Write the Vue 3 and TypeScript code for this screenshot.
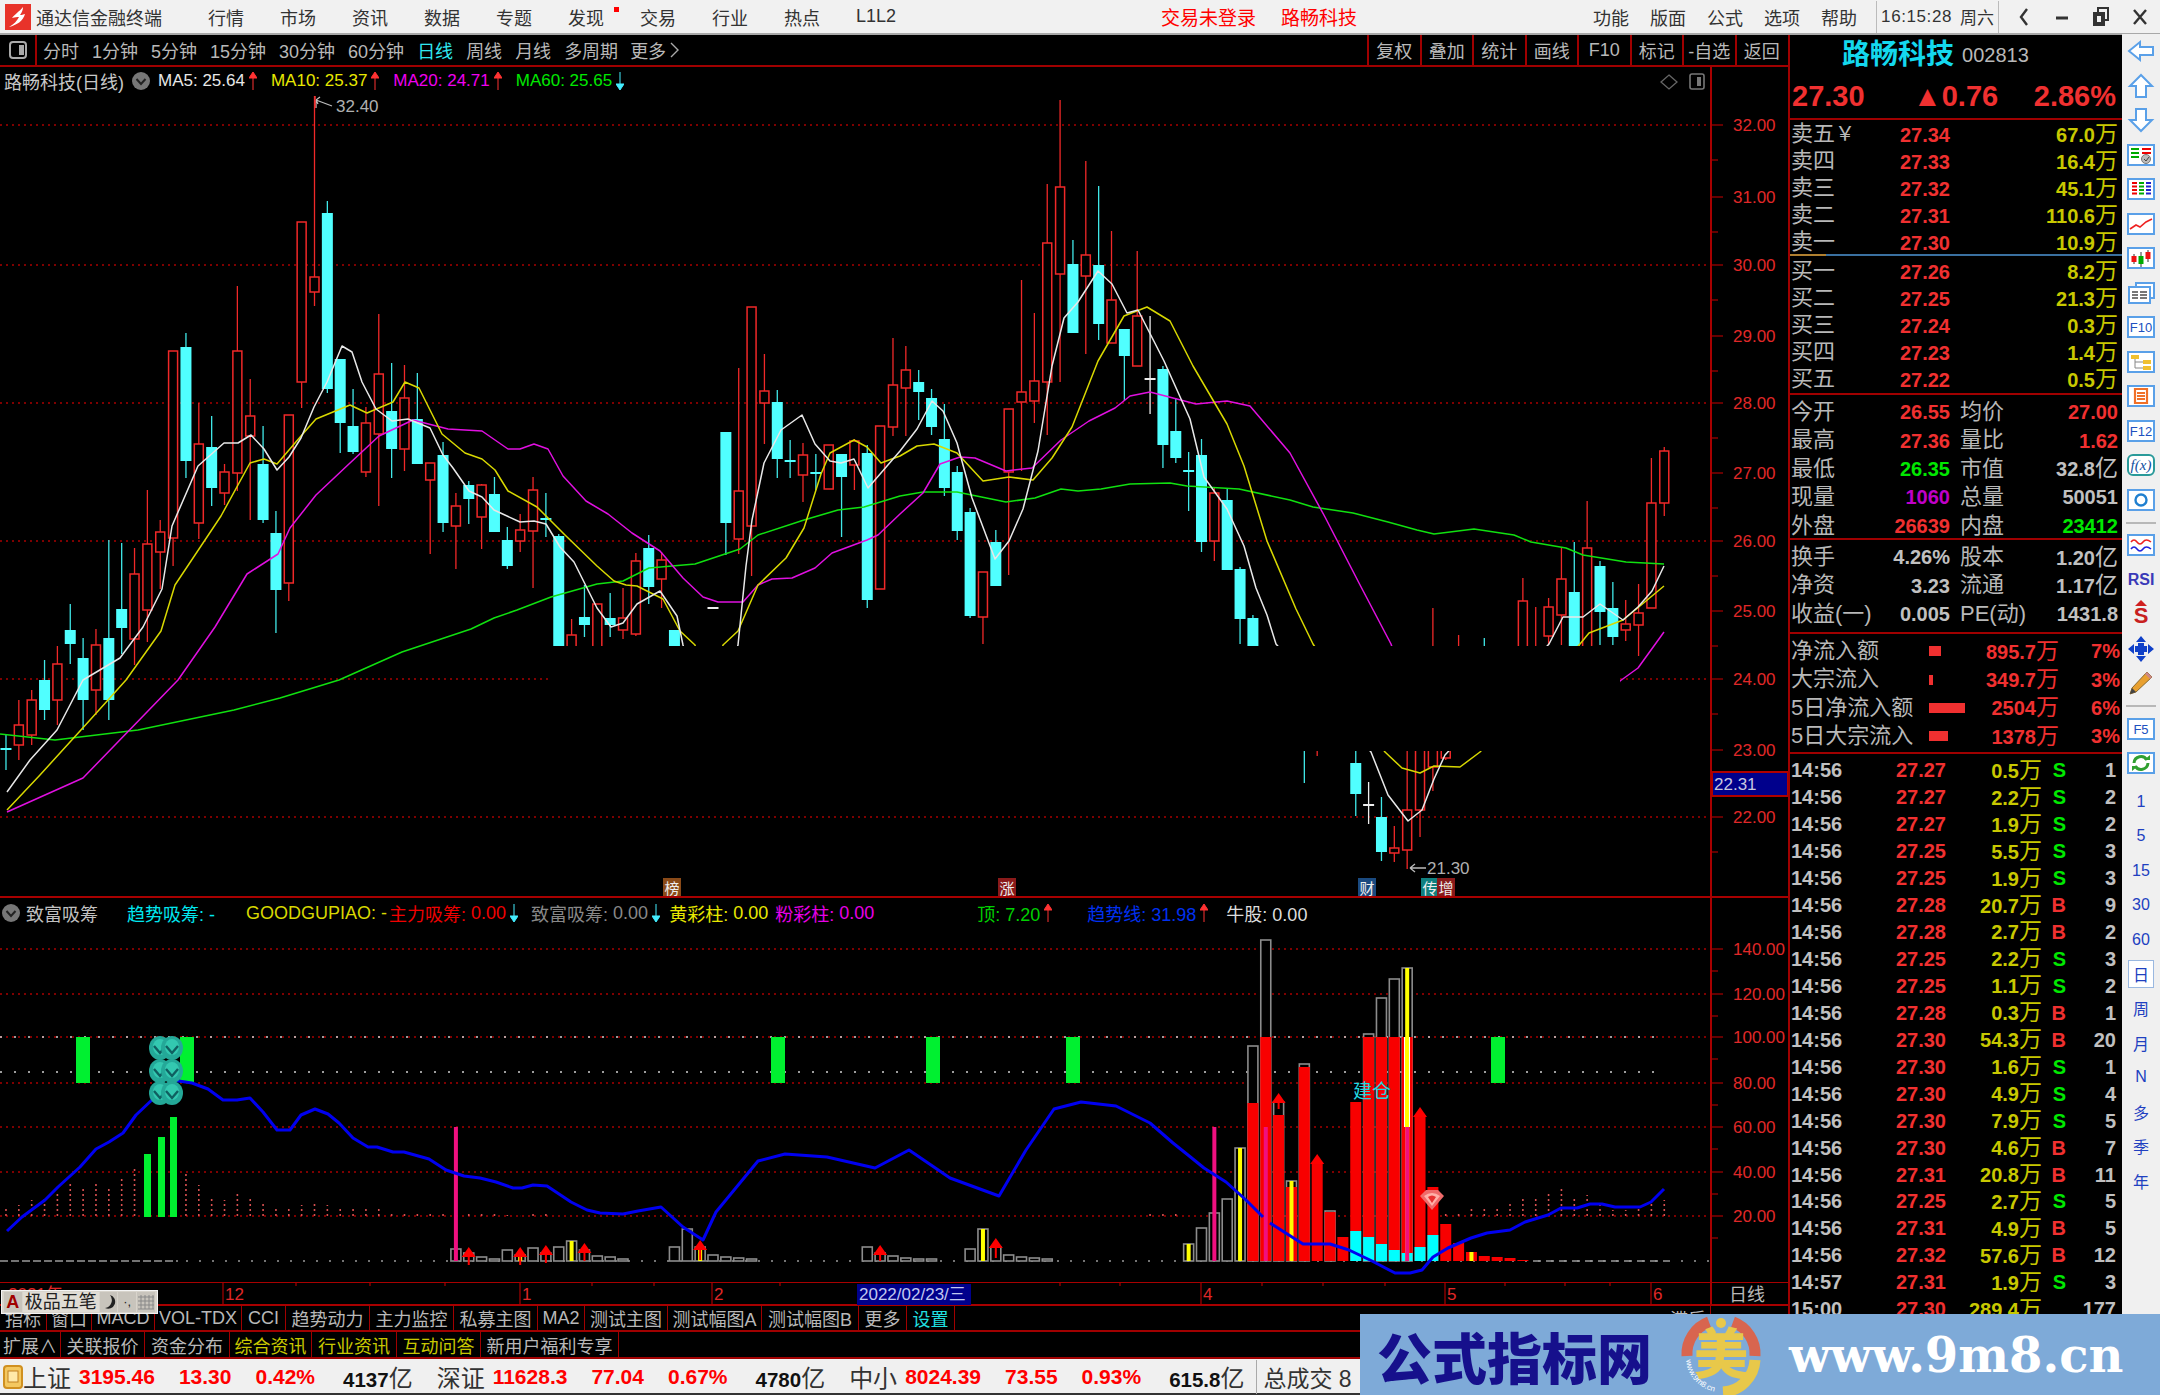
<template>
  <div class="app">
    <header class="titlebar">
      <svg class="logo" width="26" height="26" viewBox="0 0 26 26">
        <rect width="26" height="26" fill="#e8332a" />
        <path d="M18 3 C14 8 11 9 7 14 C10 13 12 13 14 13 C12 17 9 20 4 23 C12 21 18 17 20 10 C17 11 16 11 15 11 C17 8 18 6 18 3Z" fill="#fff" />
      </svg>
      <span class="app-name">通达信金融终端</span>
      <nav class="menu">
        <span v-for="m in menus" :key="m" :class="{ dot: m === '发现' }">{{ m }}</span>
      </nav>
      <span class="login">交易未登录</span>
      <span class="login stock">路畅科技</span>
      <nav class="menu right">
        <span v-for="m in rightMenus" :key="m">{{ m }}</span>
      </nav>
      <div class="clock"><span class="time">16:15:28</span><span>周六</span></div>
      <div class="winbtns">
        <svg width="18" height="22" viewBox="0 0 18 22"><path d="M12 3 L6 11 L12 19" fill="none" stroke="#333" stroke-width="2.4" /></svg>
        <svg width="18" height="22" viewBox="0 0 18 22"><path d="M3 12 H15" stroke="#333" stroke-width="3" /></svg>
        <svg width="20" height="22" viewBox="0 0 20 22"><path d="M7 6 V2 H17 V14 H13 M3 7 H13 V19 H3 Z M5 9 H11 V17 H5 Z" fill="none" stroke="#333" stroke-width="2" /></svg>
        <svg width="18" height="22" viewBox="0 0 18 22"><path d="M3 4 L15 18 M15 4 L3 18" stroke="#333" stroke-width="2.4" /></svg>
      </div>
    </header>

    <div class="body">
      <div class="left">
        <div class="toolbar">
          <div class="tool-toggle">
            <svg width="20" height="20" viewBox="0 0 20 20"><rect x="2" y="2" width="16" height="16" rx="3" fill="none" stroke="#aaa" stroke-width="2" /><rect x="11" y="5" width="5" height="10" fill="#aaa" /></svg>
          </div>
          <span v-for="p in periods" :key="p" class="period" :class="{ active: p === '日线' }">{{ p }}</span>
          <span class="period more">更多
            <svg width="9" height="16" viewBox="0 0 9 16"><path d="M1 1 L8 8 L1 15" fill="none" stroke="#aaa" stroke-width="1.4" /></svg>
          </span>
          <div class="tool-btns">
            <span v-for="b in toolBtns" :key="b">{{ b }}</span>
          </div>
        </div>

        <div class="pane">
          <div class="legend">
            <span class="stock-name">路畅科技(日线)</span>
            <svg class="chev" width="18" height="18" viewBox="0 0 18 18"><circle cx="9" cy="9" r="9" fill="#777" /><path d="M4.5 7 L9 12 L13.5 7" fill="none" stroke="#222" stroke-width="2" /></svg>
            <span v-for="m in maLegend" :key="m.t" class="ma-item" :style="{ color: m.c }">{{ m.t }}
              <svg width="8" height="18" viewBox="0 0 8 18"><path :d="m.up ? arrowUp : arrowDown" :fill="m.up ? '#f33' : '#4ef'" :stroke="m.up ? '#f33' : '#4ef'" /></svg>
            </span>
          </div>
          <svg class="chart" width="1788" height="831" viewBox="0 67 1788 831">
            <g class="grid-red">
              <line v-for="y in [125, 265, 403, 541, 679, 817]" :key="y" x1="0" x2="1711" :y1="y" :y2="y" />
            </g>
            <g v-for="c in candles" :key="c[0]">
              <template v-if="c[5] === 'r'">
                <line :x1="cx(c[0])" :x2="cx(c[0])" :y1="c[1]" :y2="c[4]" class="wick-r" />
                <rect :x="cx(c[0]) - 4.5" :y="c[2]" width="9" :height="c[3] - c[2]" class="body-r" />
              </template>
              <template v-else>
                <line :x1="cx(c[0])" :x2="cx(c[0])" :y1="c[1]" :y2="c[4]" :class="c[5] === 'c' ? 'wick-c' : 'wick-w'" />
                <rect :x="cx(c[0]) - 5.5" :y="c[2]" width="11" :height="Math.max(c[3] - c[2], 2)" :class="c[5] === 'c' ? 'body-c' : 'body-w'" />
              </template>
            </g>
            <polyline :points="ma60" class="ma" stroke="#10e010" />
            <polyline :points="ma20" class="ma" stroke="#e010e0" />
            <polyline :points="ma10" class="ma" stroke="#d8d800" />
            <polyline :points="ma5" class="ma" stroke="#e8e8e8" />
            <!-- the band the source screenshot has blanked out -->
            <rect x="551" y="646" width="1069" height="105" fill="#000" />
            <path d="M332 106 L316 100 M316 100 L320 97 M316 100 L318 104 M316 100 V108" fill="none" stroke="#bbb" stroke-width="1.3" />
            <line x1="315" x2="315" y1="96" y2="108" stroke="#e33" stroke-width="1.5" />
            <text x="336" y="112" class="lbl-gray">32.40</text>
            <path d="M1426 868 H1410 M1410 868 L1415 864 M1410 868 L1415 872" fill="none" stroke="#bbb" stroke-width="1.3" />
            <text x="1427" y="874" class="lbl-gray">21.30</text>
            <g v-for="m in markers" :key="m.t">
              <rect :x="m.x - 9" y="878" width="18" height="20" :fill="m.bg" />
              <text :x="m.x" y="894" text-anchor="middle" class="marker">{{ m.t }}</text>
            </g>
            <path d="M1669 75 L1677 82 L1669 89 L1661 82 Z" fill="none" stroke="#666" stroke-width="1.3" />
            <rect x="1690" y="74" width="14" height="15" rx="2" fill="none" stroke="#777" stroke-width="1.6" />
            <rect x="1697" y="77" width="4" height="9" fill="#777" />
            <line x1="1711" x2="1711" y1="67" y2="898" class="axis" />
            <g v-for="l in priceAxis" :key="l.t">
              <line x1="1711" x2="1723" :y1="l.y" :y2="l.y" class="tick" />
              <line x1="1711" x2="1718" :y1="l.y + 35" :y2="l.y + 35" class="tick" />
              <text x="1733" :y="l.y + 6" class="lbl-red">{{ l.t }}</text>
            </g>
            <rect x="1712" y="772" width="76" height="24" fill="#00008c" stroke="#b00000" stroke-width="2" />
            <text x="1714" y="790" class="lbl-light">22.31</text>
            <line x1="0" x2="1788" y1="897" y2="897" class="axis" />
          </svg>
        </div>

        <div class="pane">
          <div class="legend sub">
            <svg class="chev" width="18" height="18" viewBox="0 0 18 18"><circle cx="9" cy="9" r="9" fill="#777" /><path d="M4.5 7 L9 12 L13.5 7" fill="none" stroke="#222" stroke-width="2" /></svg>
            <span class="sub-title">致富吸筹</span>
            <span v-for="s in subLegend" :key="s.t" class="sub-item" :style="{ marginLeft: s.ml + 'px', color: s.c }">
              {{ s.t }}<em v-if="s.v" :style="{ color: s.vc || s.c }">{{ s.v }}</em>
              <svg v-if="s.a" width="8" height="18" viewBox="0 0 8 18"><path :d="s.a === 'up' ? arrowUp : arrowDown" :fill="s.a === 'up' ? '#f33' : '#4ef'" :stroke="s.a === 'up' ? '#f33' : '#4ef'" /></svg>
            </span>
          </div>
          <svg class="chart" width="1788" height="384" viewBox="0 898 1788 384">
            <g class="grid-red">
              <line v-for="y in [949, 994, 1037, 1083, 1127, 1172, 1216]" :key="y" x1="0" x2="1711" :y1="y" :y2="y" />
            </g>
            <g class="grid-white">
              <line x1="0" x2="1665" y1="1037" y2="1037" />
              <line x1="0" x2="1665" y1="1072" y2="1072" />
            </g>
            <line x1="0" x2="178" y1="1261" y2="1261" stroke="#999" stroke-width="1.6" stroke-dasharray="8 3" />
            <line x1="186" x2="1710" y1="1261" y2="1261" class="base-dots" />
            <line x1="1533" x2="1668" y1="1261" y2="1261" stroke="#999" stroke-width="1.6" stroke-dasharray="8 5" />
            <line v-for="d in dotBars" :key="d[0]" :x1="cx(d[0])" :x2="cx(d[0])" y1="1216" :y2="1216 - d[1]" class="dot-bar" />
            <rect v-for="b in greenBlocks" :key="b" :x="b" y="1037" width="14" height="46" fill="#00f030" />
            <rect x="144" y="1154" width="7" height="63" fill="#00f030" />
            <rect x="158" y="1137" width="7" height="80" fill="#00f030" />
            <rect x="170" y="1117" width="7" height="100" fill="#00f030" />
            <g v-for="b in volBars" :key="b[0]">
              <rect v-if="b[1]" :x="cx(b[0]) - 5" :y="1261 - b[1]" width="10" :height="b[1]" class="vol-gray" />
              <rect v-if="b[2]" :x="cx(b[0]) - 5.5" :y="1261 - b[2]" width="11" :height="b[2]" fill="#f80000" />
              <rect v-if="b[3]" :x="cx(b[0]) - 5.5" :y="1261 - b[3]" width="11" :height="b[3]" fill="#00ffff" />
              <rect v-if="b[4]" :x="cx(b[0]) - 2" :y="1261 - b[4]" width="4" :height="b[4]" fill="#ffff00" />
            </g>
            <rect x="1404" y="1037" width="6" height="90" fill="#fff" />
            <rect x="1405" y="1037" width="4" height="90" fill="#ffff00" />
            <rect v-for="i in pinkLines" :key="i" :x="cx(i) - 2" y="1127" width="4" height="134" fill="#f01080" />
            <g v-for="a in upArrows" :key="a[0]" :transform="`translate(${cx(a[0])} ${a[1]})`">
              <path d="M0 0 L7 10 H-7 Z" fill="#f00" />
              <line x1="0" x2="0" y1="8" :y2="a[2]" stroke="#f00" stroke-width="2" />
            </g>
            <polyline :points="blueLine" class="blue" />
            <polyline :points="blueLine2" class="blue" />
            <g v-for="c in coins" :key="c[0] + '-' + c[1]" :transform="`translate(${c[0]} ${c[1]})`">
              <ellipse rx="11" ry="12" fill="#24a898" />
              <ellipse rx="7" ry="8" cy="-1" fill="#33c8b0" />
              <path d="M-6 -2 L0 5 L6 -2" fill="none" stroke="#0f5f60" stroke-width="2.4" />
            </g>
            <text x="1372" y="1098" text-anchor="middle" class="build">建仓</text>
            <g transform="translate(1432 1199)">
              <path d="M-12 -3 L-6 -9 H6 L12 -3 L0 11 Z" fill="#f06a6a" />
              <path d="M-8 -3 Q0 -9 8 -3 L0 7 Z" fill="#ffb0a8" />
              <path d="M-4 -2 Q0 -5 4 -2 L0 4 Z" fill="#e83030" />
            </g>
            <line x1="1711" x2="1711" y1="898" y2="1282" class="axis" />
            <g v-for="l in subAxis" :key="l.t">
              <line x1="1711" x2="1723" :y1="l.y" :y2="l.y" class="tick" />
              <line x1="1711" x2="1718" :y1="l.y + 22" :y2="l.y + 22" class="tick" />
              <text x="1733" :y="l.y + 6" class="lbl-red">{{ l.t }}</text>
            </g>
          </svg>
        </div>

        <svg class="chart" width="1788" height="24" viewBox="0 1282 1788 24">
          <line x1="0" x2="1788" y1="1282" y2="1282" class="axis" />
          <line x1="0" x2="1788" y1="1305" y2="1305" class="axis" />
          <line v-for="x in dateTicks" :key="x" :x1="x" :x2="x" y1="1282" y2="1286" class="tick" />
          <g v-for="d in dateLabels" :key="d.x">
            <line :x1="d.x" :x2="d.x" y1="1282" y2="1305" class="tick" />
            <text :x="d.x + 2" y="1300" class="lbl-red">{{ d.t }}</text>
          </g>
          <text x="8" y="1300" class="lbl-red">2021年</text>
          <rect x="857" y="1284" width="114" height="21" fill="#00008c" />
          <text x="859" y="1300" class="lbl-date">2022/02/23/三</text>
          <line x1="1711" x2="1711" y1="1282" y2="1305" class="axis" />
          <text x="1729" y="1301" class="lbl-cjk">日线</text>
        </svg>

        <div class="tabs first">
          <span v-for="t in tabs1" :key="t.t" :class="t.c" :style="{ width: t.w + 'px' }">{{ t.t }}</span>
          <span class="tail" style="width: 45px">滞后</span>
          <span style="width: 76px"></span>
        </div>
        <div class="tabs">
          <span v-for="t in tabs2" :key="t.t" :class="t.c" :style="{ width: t.w + 'px' }">{{ t.t }}</span>
        </div>
      </div>

      <aside class="quote">
        <div class="q-title"><b>路畅科技</b><span>002813</span></div>
        <div class="q-price"><span>27.30</span><span>▲0.76</span><span class="pct">2.86%</span></div>
        <div class="book sell">
          <div v-for="r in sells" :key="r[0]" class="book-row">
            <span class="lab">{{ r[0] }}<i v-if="r[0] === '卖五'">￥</i></span>
            <b class="red">{{ r[1] }}</b>
            <b class="vol">{{ r[2] }}<i>万</i></b>
          </div>
        </div>
        <div class="book buy">
          <div v-for="r in buys" :key="r[0]" class="book-row">
            <span class="lab">{{ r[0] }}</span>
            <b class="red">{{ r[1] }}</b>
            <b class="vol">{{ r[2] }}<i>万</i></b>
          </div>
        </div>
        <div class="stats s1">
          <div v-for="s in stats1" :key="s[0]" class="cell">
            <span class="lab">{{ s[0] }}</span><b :class="s[2]">{{ s[1] }}<i v-if="s[3]">{{ s[3] }}</i></b>
          </div>
        </div>
        <div class="stats s2">
          <div v-for="s in stats2" :key="s[0]" class="cell">
            <span class="lab">{{ s[0] }}</span><b class="gray">{{ s[1] }}<i v-if="s[2]">{{ s[2] }}</i></b>
          </div>
        </div>
        <div class="flow">
          <div v-for="f in flows" :key="f.l" class="flow-row">
            <span class="lab">{{ f.l }}</span>
            <span class="bar-cell"><u :style="{ width: f.w + 'px' }"></u></span>
            <b class="red">{{ f.v }}<i>万</i></b>
            <b class="red">{{ f.p }}</b>
          </div>
        </div>
        <div class="ticks">
          <div v-for="(t, i) in ticks" :key="i" class="tick-row">
            <b class="gray">{{ t[0] }}</b>
            <b class="red">{{ t[1] }}</b>
            <b class="vol" :class="{ mag: t[0] === '15:00' }">{{ t[2] }}<i>万</i></b>
            <b :class="t[3] === 'S' ? 'green' : 'red'">{{ t[3] }}</b>
            <b class="gray">{{ t[4] }}</b>
          </div>
        </div>
      </aside>

      <nav class="sidebar">
        <div class="ic"><svg width="30" height="26" viewBox="0 0 30 26"><path d="M3 13 L14 4 V9 H27 V17 H14 V22 Z" class="ar" /></svg></div>
        <div class="ic"><svg width="30" height="26" viewBox="0 0 30 26"><path d="M15 2 L26 13 H20 V24 H10 V13 H4 Z" class="ar" /></svg></div>
        <div class="ic"><svg width="30" height="26" viewBox="0 0 30 26"><path d="M15 24 L26 13 H20 V2 H10 V13 H4 Z" class="ar" /></svg></div>
        <div class="ic"><svg width="30" height="26" viewBox="0 0 30 26">
          <rect x="2" y="3" width="26" height="20" class="fr" />
          <path d="M5 7 H13 M5 11 H13 M5 15 H13" stroke="#0a0" stroke-width="2" /><path d="M16 7 H25 M16 11 H25" stroke="#e00" stroke-width="2" />
          <circle cx="20" cy="17" r="4.5" fill="#bbb" stroke="#777" /><path d="M18 17 L20 19 L23 15" fill="none" stroke="#444" />
        </svg></div>
        <div class="ic"><svg width="30" height="26" viewBox="0 0 30 26">
          <rect x="2" y="3" width="26" height="20" class="fr" />
          <path d="M6 7 H11 M6 10.5 H11 M6 14 H11 M6 17.5 H11" stroke="#e00" stroke-width="2" /><path d="M13 7 H18 M13 10.5 H18 M13 14 H18 M13 17.5 H18" stroke="#0a0" stroke-width="2" /><path d="M20 7 H25 M20 10.5 H25 M20 14 H25 M20 17.5 H25" stroke="#22c" stroke-width="2" />
        </svg></div>
        <div class="ic"><svg width="30" height="26" viewBox="0 0 30 26">
          <rect x="2" y="3" width="26" height="20" class="fr" />
          <path d="M4 18 L10 14 L14 16 L20 11 L26 8" fill="none" stroke="#e22" stroke-width="1.6" />
        </svg></div>
        <div class="ic"><svg width="30" height="26" viewBox="0 0 30 26">
          <rect x="2" y="3" width="26" height="20" class="fr" />
          <path d="M8 9 V19 M15 7 V22 M22 5 V17" stroke="#333" />
          <rect x="5.5" y="11" width="5" height="6" fill="#e11" /><rect x="12.5" y="11" width="5" height="8" fill="#0a0" /><rect x="19.5" y="7" width="5" height="7" fill="#e11" />
        </svg></div>
        <div class="ic"><svg width="30" height="26" viewBox="0 0 30 26">
          <rect x="10" y="3" width="18" height="15" class="fr" /><rect x="3" y="7" width="21" height="16" class="fr" />
          <path d="M6 12 H12 M6 15 H12 M6 18 H12 M14 12 H21 M14 15 H21 M14 18 H21" stroke="#777" stroke-width="1.8" />
        </svg></div>
        <div class="ic"><svg width="30" height="26" viewBox="0 0 30 26"><rect x="2" y="3" width="26" height="20" class="fr" /><text x="15" y="18" text-anchor="middle" class="ic-txt">F10</text></svg></div>
        <div class="ic"><svg width="30" height="26" viewBox="0 0 30 26">
          <rect x="2" y="3" width="26" height="20" class="fr" />
          <path d="M9 8 V19 H18 M9 13 H18" fill="none" stroke="#888" /><rect x="5" y="6" width="8" height="4" fill="#f0c030" /><rect x="17" y="11" width="8" height="4" fill="#f0c030" /><rect x="17" y="17" width="8" height="4" fill="#f0c030" />
        </svg></div>
        <div class="ic"><svg width="30" height="26" viewBox="0 0 30 26">
          <rect x="2" y="3" width="26" height="20" class="fr" />
          <path d="M9 6 H21 V20 H9 Z M11 10 H19 M11 13 H19 M11 16 H19" fill="none" stroke="#f07028" stroke-width="2.2" />
        </svg></div>
        <div class="ic"><svg width="30" height="26" viewBox="0 0 30 26"><rect x="2" y="3" width="26" height="20" class="fr" /><text x="15" y="18" text-anchor="middle" class="ic-txt">F12</text></svg></div>
        <div class="ic"><svg width="30" height="26" viewBox="0 0 30 26"><rect x="2" y="3" width="26" height="20" rx="5" fill="#fff" stroke="#2a9a9a" stroke-width="2" /><text x="15" y="18" text-anchor="middle" class="ic-fx">f(x)</text></svg></div>
        <div class="ic"><svg width="30" height="26" viewBox="0 0 30 26"><rect x="2" y="3" width="26" height="20" class="fr" /><circle cx="15" cy="13" r="5.5" fill="none" stroke="#2080d0" stroke-width="2.4" /></svg></div>
        <hr />
        <div class="ic"><svg width="30" height="26" viewBox="0 0 30 26">
          <rect x="2" y="3" width="26" height="20" class="fr" />
          <path d="M5 10 Q8 6 11 10 T17 10 T25 10" fill="none" stroke="#e22" stroke-width="1.6" /><path d="M5 17 Q8 13 11 17 T17 17 T25 17" fill="none" stroke="#22d" stroke-width="1.6" />
        </svg></div>
        <div class="ic"><span class="rsi">RSI</span></div>
        <div class="ic"><svg width="30" height="30" viewBox="0 0 30 30">
          <path d="M15 1 L21 7 H9 Z" fill="#d02020" /><text x="15" y="24" text-anchor="middle" class="ic-s">S</text>
        </svg></div>
        <div class="ic"><svg width="30" height="28" viewBox="0 0 30 28">
          <path d="M15 1 L20 7 H10 Z M15 27 L20 21 H10 Z M2 14 L8 9 V19 Z M28 14 L22 9 V19 Z" fill="#1040c8" /><rect x="9" y="11" width="12" height="6" fill="#1040c8" /><rect x="12" y="8" width="6" height="12" fill="#1040c8" />
        </svg></div>
        <div class="ic"><svg width="30" height="28" viewBox="0 0 30 28">
          <path d="M21 3 L26 8 L10 23 L4 25 L6 19 Z" fill="#e8a030" stroke="#8a6a30" /><path d="M21 3 L26 8 L24 10 L19 5 Z" fill="#c88" /><path d="M6 19 L10 23 L4 25 Z" fill="#444" />
        </svg></div>
        <hr />
        <div class="ic"><svg width="30" height="26" viewBox="0 0 30 26"><rect x="2" y="3" width="26" height="20" class="fr" /><text x="15" y="18" text-anchor="middle" class="ic-txt">F5</text></svg></div>
        <div class="ic"><svg width="30" height="26" viewBox="0 0 30 26">
          <rect x="2" y="3" width="26" height="20" class="fr" />
          <path d="M8 13 A7 7 0 0 1 21 10 M22 13 A7 7 0 0 1 9 16" fill="none" stroke="#30a030" stroke-width="3" /><path d="M18 10 H24 V5 Z M12 16 H6 V21 Z" fill="#30a030" />
        </svg></div>
        <div class="side-labels">
          <div v-for="l in sideLabels" :key="l" class="ic lab-btn" :class="{ on: l === '日' }">{{ l }}</div>
        </div>
      </nav>
    </div>

    <footer class="status">
      <svg class="st-icon" width="22" height="26" viewBox="0 0 22 26"><rect x="2" y="2" width="18" height="22" rx="3" fill="#f4c860" stroke="#d09020" stroke-width="2" /><rect x="6" y="7" width="10" height="11" fill="#ffe9a8" stroke="#c08020" /></svg>
      <template v-for="m in markets" :key="m.n">
        <span class="st-name">{{ m.n }}</span>
        <span class="st-red first">{{ m.p }}</span>
        <span class="st-red">{{ m.d }}</span>
        <span class="st-red">{{ m.r }}</span>
        <span class="st-amt"><b>{{ m.a }}</b><i>亿</i></span>
      </template>
      <span class="st-total">总成交 8</span>
    </footer>

    <!-- input-method bar and the site's watermark lie over everything else -->
    <div class="ime">
      <b>A</b><span class="ime-name">极品五笔</span>
      <span class="ime-key"><svg width="14" height="18" viewBox="0 0 14 18"><path d="M8 2 A7 7 0 1 1 3 15 A8 8 0 0 0 8 2 Z" fill="#222" /></svg></span>
      <span class="ime-key">·,</span>
      <span class="ime-key"><svg width="18" height="18" viewBox="0 0 18 18"><path d="M1 4 H17 M1 8 H17 M1 12 H17 M1 16 H17 M4 2 V16 M8 2 V16 M12 2 V16 M16 2 V16" stroke="#888" /></svg></span>
    </div>
    <div class="watermark">
      <span class="wm-cn">公式指标网</span>
      <svg class="wm-logo" width="84" height="81" viewBox="0 0 84 81">
        <path d="M8 42 A34 34 0 0 1 30 8" fill="none" stroke="#d8654f" stroke-width="11" />
        <path d="M54 8 A34 34 0 0 1 76 42" fill="none" stroke="#d8654f" stroke-width="11" />
        <path d="M76 46 A34 34 0 0 1 44 78" fill="none" stroke="#e8c84a" stroke-width="11" />
        <path id="wm-arc" d="M7 46 A35 35 0 0 0 40 78" fill="none" />
        <text class="wm-tiny"><textPath href="#wm-arc">www.9m8.cn</textPath></text>
        <text x="42" y="60" text-anchor="middle" class="wm-mei">美</text>
        <circle cx="42" cy="9" r="5" fill="#e8c84a" />
      </svg>
      <span class="wm-url">www.9m8.cn</span>
    </div>
  </div>
</template>

<script setup lang="ts">
type Candle = [number, number, number, number, number, 'r' | 'c' | 'w']

const cx = (i: number) => 57.4 + 12.855 * i

const arrowUp = 'M4 0 L8 6 H0 Z M4 5 V18'
const arrowDown = 'M4 18 L8 12 H0 Z M4 13 V0'

const menus = ['行情', '市场', '资讯', '数据', '专题', '发现', '交易', '行业', '热点', 'L1L2']
const rightMenus = ['功能', '版面', '公式', '选项', '帮助']
const periods = ['分时', '1分钟', '5分钟', '15分钟', '30分钟', '60分钟', '日线', '周线', '月线', '多周期']
const toolBtns = ['复权', '叠加', '统计', '画线', 'F10', '标记', '-自选', '返回']

const maLegend = [
  { t: 'MA5: 25.64', c: '#e8e8e8', up: true },
  { t: 'MA10: 25.37', c: '#e8e800', up: true },
  { t: 'MA20: 24.71', c: '#f000f0', up: true },
  { t: 'MA60: 25.65', c: '#00e800', up: false },
]

const subLegend: { t: string; v?: string; c: string; vc?: string; a?: string; ml: number }[] = [
  { t: '趋势吸筹: -', c: '#00e8f0', ml: 29 },
  { t: 'GOODGUPIAO: -', c: '#d8d800', ml: 31 },
  { t: '主力吸筹: ', v: '0.00', c: '#f00000', a: 'down', ml: 2 },
  { t: '致富吸筹: ', v: '0.00', c: '#888', a: 'down', ml: 13 },
  { t: '黄彩柱: ', v: '0.00', c: '#e8e800', ml: 9 },
  { t: '粉彩柱: ', v: '0.00', c: '#e800e8', ml: 7 },
  { t: '顶: 7.20', c: '#00d000', a: 'up', ml: 103 },
  { t: '趋势线: 31.98', c: '#0030f0', a: 'up', ml: 35 },
  { t: '牛股: 0.00', c: '#ddd', ml: 18 },
]

const candles: Candle[] = [
  [-4, 735, 748, 748, 770, 'c'], [-3, 700, 725, 745, 760, 'r'], [-2, 690, 700, 735, 745, 'r'], [-1, 660, 680, 710, 720, 'c'],
  [0, 646, 664, 700, 725, 'r'], [1, 604, 630, 644, 664, 'c'], [2, 638, 658, 700, 730, 'c'], [3, 629, 645, 690, 715, 'r'],
  [4, 540, 638, 700, 720, 'c'], [5, 543, 609, 628, 654, 'c'], [6, 548, 574, 639, 665, 'r'], [7, 490, 544, 610, 642, 'r'],
  [8, 520, 532, 552, 589, 'r'], [9, 351, 351, 538, 566, 'r'], [10, 333, 347, 461, 478, 'c'], [11, 403, 444, 523, 539, 'r'],
  [12, 416, 447, 488, 506, 'c'], [13, 464, 472, 493, 505, 'r'], [14, 286, 351, 473, 491, 'r'], [15, 379, 416, 436, 520, 'r'],
  [16, 426, 464, 520, 523, 'c'], [17, 511, 533, 590, 633, 'c'], [18, 415, 415, 583, 601, 'r'], [19, 222, 222, 382, 408, 'r'],
  [20, 96, 277, 292, 306, 'r'], [21, 201, 213, 389, 393, 'c'], [22, 359, 359, 423, 453, 'c'], [23, 389, 426, 452, 454, 'c'],
  [24, 407, 423, 472, 477, 'r'], [25, 314, 374, 434, 506, 'r'], [26, 363, 411, 449, 478, 'c'], [27, 365, 398, 449, 471, 'r'],
  [28, 373, 419, 464, 464, 'c'], [29, 463, 463, 480, 554, 'r'], [30, 442, 455, 523, 532, 'c'], [31, 493, 506, 526, 569, 'r'],
  [32, 481, 485, 499, 524, 'c'], [33, 484, 485, 517, 549, 'r'], [34, 477, 494, 532, 532, 'c'], [35, 527, 540, 566, 569, 'c'],
  [36, 514, 530, 541, 552, 'r'], [37, 477, 490, 531, 588, 'r'], [38, 493, 518, 518, 537, 'c'], [39, 534, 536, 720, 730, 'c'],
  [40, 619, 635, 700, 710, 'r'], [41, 585, 617, 625, 637, 'c'], [42, 604, 604, 720, 730, 'r'], [43, 593, 618, 625, 637, 'c'],
  [44, 588, 618, 630, 639, 'r'], [45, 553, 561, 634, 636, 'r'], [46, 535, 548, 587, 604, 'c'], [47, 552, 560, 579, 608, 'r'],
  [48, 630, 630, 720, 730, 'c'], [51, 607, 607, 607, 607, 'w'], [52, 432, 432, 523, 555, 'c'], [53, 368, 491, 539, 554, 'r'],
  [54, 307, 307, 526, 576, 'r'], [55, 354, 391, 403, 444, 'r'], [56, 390, 402, 459, 478, 'c'], [57, 440, 460, 460, 478, 'c'],
  [58, 443, 455, 475, 502, 'r'], [59, 454, 472, 472, 490, 'c'], [60, 445, 445, 489, 489, 'r'], [61, 454, 454, 477, 537, 'c'],
  [62, 439, 441, 465, 490, 'r'], [63, 445, 453, 600, 608, 'c'], [64, 426, 426, 589, 589, 'r'], [65, 338, 385, 427, 436, 'r'],
  [66, 346, 370, 388, 436, 'r'], [67, 370, 382, 392, 420, 'c'], [68, 389, 398, 427, 435, 'c'], [69, 404, 439, 488, 496, 'c'],
  [70, 466, 472, 531, 540, 'c'], [71, 508, 512, 616, 618, 'c'], [72, 572, 572, 617, 644, 'r'], [73, 530, 542, 586, 586, 'c'],
  [74, 409, 409, 472, 575, 'r'], [75, 280, 392, 402, 471, 'r'], [76, 313, 381, 401, 423, 'r'], [77, 184, 243, 382, 435, 'r'],
  [78, 100, 187, 274, 382, 'r'], [79, 240, 264, 333, 333, 'c'], [80, 161, 255, 276, 354, 'r'], [81, 186, 265, 324, 340, 'c'],
  [82, 231, 300, 343, 343, 'r'], [83, 329, 329, 356, 401, 'c'], [84, 251, 316, 366, 366, 'r'], [85, 316, 378, 378, 414, 'w'],
  [86, 366, 369, 445, 468, 'c'], [87, 398, 431, 458, 463, 'c'], [88, 452, 470, 470, 511, 'c'], [89, 439, 455, 542, 552, 'c'],
  [90, 487, 493, 541, 561, 'r'], [91, 488, 500, 570, 570, 'c'], [92, 567, 569, 619, 644, 'c'], [93, 615, 618, 730, 735, 'c'],
  [97, 700, 720, 740, 783, 'c'], [98, 720, 730, 745, 756, 'r'], [101, 740, 763, 794, 816, 'c'], [102, 782, 804, 804, 824, 'w'],
  [103, 797, 817, 852, 861, 'c'], [104, 826, 848, 853, 862, 'r'], [105, 740, 810, 850, 869, 'r'], [106, 720, 740, 810, 837, 'r'],
  [107, 608, 720, 767, 791, 'r'], [108, 730, 740, 758, 760, 'r'], [109, 635, 700, 720, 730, 'r'], [111, 638, 660, 680, 700, 'c'],
  [114, 578, 601, 700, 720, 'r'], [115, 607, 636, 636, 660, 'r'], [116, 598, 607, 636, 645, 'r'], [117, 548, 579, 615, 645, 'r'],
  [118, 542, 592, 700, 720, 'c'], [119, 501, 548, 700, 720, 'r'], [120, 561, 566, 612, 645, 'c'], [121, 582, 608, 637, 645, 'c'],
  [122, 600, 624, 630, 641, 'r'], [123, 584, 613, 625, 656, 'r'], [124, 458, 503, 608, 608, 'r'], [125, 447, 451, 503, 516, 'r'],
]

const ma5 = '7,792 30,760 57,730 83,680 120,658 143,627 162,589 172,526 198,466 224,443 238,443 251,435 264,449 277,470 289,457 301,438 314,407 327,382 342,346 352,352 362,382 376,409 392,421 408,419 430,428 443,455 453,468 469,491 482,497 494,510 520,522 534,521 546,524 560,547 574,562 597,608 611,627 623,623 637,604 660,591 677,616 683,645 690,670 730,670 738,645 746,566 752,520 764,463 781,430 802,415 815,444 830,461 841,463 854,459 868,488 900,451 917,429 932,401 943,411 957,443 972,498 995,559 1009,541 1023,509 1038,451 1052,366 1064,318 1078,302 1098,271 1112,284 1127,313 1138,310 1164,361 1190,419 1204,477 1227,509 1244,546 1256,588 1267,615 1276,644 1371,752 1388,795 1408,821 1422,810 1434,779 1445,755 1549,644 1563,617 1583,617 1600,604 1623,620 1638,607 1652,591 1664,566'
const ma10 = '7,810 40,775 90,720 126,680 161,631 175,585 221,516 250,463 264,459 277,464 301,436 316,419 350,405 367,413 393,402 405,382 419,388 442,434 465,453 482,459 495,470 508,491 537,507 565,535 597,566 614,581 626,585 637,586 663,599 680,631 695,645 700,670 718,670 723,645 738,631 758,585 786,558 804,528 821,474 830,453 854,440 867,447 881,463 900,456 917,446 934,444 957,453 983,481 1009,477 1033,480 1052,458 1072,427 1098,361 1124,316 1147,307 1170,321 1193,366 1227,424 1244,466 1267,541 1296,609 1313,644 1385,752 1402,768 1420,773 1434,766 1460,767 1480,752 1580,644 1589,633 1623,620 1646,601 1664,586'
const ma20 = '7,812 83,778 178,680 215,627 247,574 278,554 290,528 316,495 350,463 379,436 413,420 448,429 482,431 508,449 520,449 534,444 548,449 563,476 586,501 608,514 632,533 660,551 683,578 703,597 718,602 743,602 758,585 772,579 792,578 815,568 832,553 867,540 878,535 900,514 923,493 940,464 960,457 975,458 1006,471 1032,468 1061,440 1089,421 1115,408 1130,396 1150,392 1196,404 1227,401 1250,406 1290,453 1325,517 1359,583 1391,644 1400,670 1610,700 1620,681 1638,668 1664,632'
const ma60 = '0,734 55,740 138,730 234,710 280,698 339,680 402,652 471,629 494,618 517,610 551,597 597,584 623,581 649,568 695,564 740,549 758,535 804,520 838,510 864,507 900,496 923,492 957,492 1006,502 1035,498 1061,489 1078,491 1101,489 1130,484 1170,483 1187,486 1239,489 1290,500 1313,507 1353,513 1388,522 1417,530 1434,534 1474,529 1514,535 1531,542 1566,548 1583,555 1626,562 1664,564'

const priceAxis = [
  { t: '32.00', y: 125 }, { t: '31.00', y: 197 }, { t: '30.00', y: 265 }, { t: '29.00', y: 336 }, { t: '28.00', y: 403 },
  { t: '27.00', y: 473 }, { t: '26.00', y: 541 }, { t: '25.00', y: 611 }, { t: '24.00', y: 679 }, { t: '23.00', y: 750 }, { t: '22.00', y: 817 },
]
const subAxis = [
  { t: '140.00', y: 949 }, { t: '120.00', y: 994 }, { t: '100.00', y: 1037 }, { t: '80.00', y: 1083 },
  { t: '60.00', y: 1127 }, { t: '40.00', y: 1172 }, { t: '20.00', y: 1216 },
]

const markers = [
  { t: '榜', x: 672, bg: '#8a4a18' },
  { t: '涨', x: 1007, bg: '#8a1a1a' },
  { t: '财', x: 1367, bg: '#1a4a80' },
  { t: '传', x: 1430, bg: '#108080' },
  { t: '增', x: 1446, bg: '#8a1a1a' },
]

// dotted stems above the 20 line: [first candle index, heights]
const dotHeights: [number, number[]][] = [
  [-4, [9, 11, 16, 18, 25, 33, 27, 34, 29, 38, 49]],
  [10, [43, 31, 20, 16, 22, 20, 14, 9, 9, 11, 14, 11, 9, 7, 7, 7, 5, 5, 5, 4, 4]],
  [32, [3, 2, 3, 1, 0, 2, 2]],
  [85, [4, 3, 3]],
  [108, [3, 5, 7, 10, 10, 13, 17, 19, 23, 30, 17, 21, 15, 6, 6, 8, 14, 16]],
]
const dotBars: [number, number][] = dotHeights.flatMap(([start, hs]) => hs.map((h, k): [number, number] => [start + k, h]))

const greenBlocks = [76, 180, 771, 926, 1066, 1491]

// [candle index, gray outline, red fill, cyan fill, yellow core]
const volBars: [number, number, number, number, number][] = [
  [31, 12, 0, 0, 0], [32, 8, 0, 0, 0], [33, 4, 0, 0, 0], [34, 2, 0, 0, 0], [35, 11, 0, 0, 0], [36, 6, 0, 0, 6], [37, 13, 0, 0, 0],
  [38, 8, 0, 0, 0], [39, 14, 0, 0, 0], [40, 20, 0, 0, 20], [41, 11, 0, 0, 0], [42, 5, 0, 0, 0], [43, 4, 0, 0, 0], [44, 2, 0, 0, 0],
  [48, 14, 0, 0, 0], [49, 32, 0, 0, 0], [50, 14, 0, 0, 14], [51, 6, 0, 0, 0], [52, 4, 0, 0, 0], [53, 3, 0, 0, 0], [54, 2, 0, 0, 0],
  [63, 14, 0, 0, 0], [64, 8, 0, 0, 0], [65, 5, 0, 0, 0], [66, 3, 0, 0, 0], [67, 2, 0, 0, 0], [68, 2, 0, 0, 0],
  [71, 12, 0, 0, 0], [72, 32, 0, 0, 32], [73, 14, 0, 0, 0], [74, 6, 0, 0, 0], [75, 4, 0, 0, 0], [76, 3, 0, 0, 0], [77, 2, 0, 0, 0],
  [88, 17, 0, 0, 17], [89, 33, 0, 0, 0], [90, 48, 0, 0, 0], [91, 62, 0, 0, 0], [92, 113, 0, 0, 113], [93, 215, 158, 0, 0], [94, 321, 224, 0, 0],
  [95, 159, 146, 0, 0], [96, 80, 74, 0, 80], [97, 197, 194, 0, 0], [98, 0, 98, 0, 0], [99, 50, 49, 0, 0], [100, 0, 24, 0, 0],
  [101, 0, 159, 30, 0], [102, 227, 224, 24, 0], [103, 263, 224, 17, 0], [104, 282, 224, 11, 0], [105, 293, 224, 8, 293], [106, 0, 146, 14, 0],
  [107, 0, 74, 26, 0], [108, 0, 37, 0, 0], [109, 0, 18, 0, 0], [110, 0, 9, 0, 9], [111, 0, 5, 0, 0], [112, 0, 4, 0, 0], [113, 0, 3, 0, 0], [114, 0, 1, 0, 0],
]

const pinkLines = [31, 90, 94, 105]
// [candle index, tip y, tail length]
const upArrows: [number, number, number][] = [
  [32, 1247, 18], [36, 1247, 18], [38, 1245, 18], [41, 1243, 18], [50, 1240, 20], [64, 1245, 16], [73, 1238, 20],
  [95, 1093, 16], [98, 1154, 10], [106, 1107, 10],
]

const blueLine = '7,1231 22,1217 45,1200 58,1187 80,1167 96,1149 109,1142 123,1133 136,1115 154,1098 172,1080 192,1083 208,1089 223,1100 237,1100 250,1098 263,1112 277,1130 290,1130 301,1115 315,1109 328,1114 339,1123 353,1138 368,1147 377,1147 393,1152 404,1152 429,1159 446,1170 464,1176 480,1178 496,1182 513,1188 522,1188 533,1185 547,1186 571,1202 587,1210 600,1213 623,1214 638,1211 661,1207 683,1227 703,1240 716,1212 758,1161 785,1154 827,1157 875,1168 909,1150 950,1178 999,1196 1026,1150 1054,1109 1081,1102 1116,1106 1150,1123 1173,1143 1188,1155 1204,1168 1226,1182 1246,1200 1263,1217'
const blueLine2 = '1270,1223 1292,1237 1303,1244 1330,1244 1349,1250 1372,1261 1395,1273 1410,1273 1422,1270 1433,1257 1448,1248 1471,1238 1487,1233 1510,1230 1525,1222 1548,1215 1561,1208 1577,1208 1590,1204 1602,1204 1615,1207 1640,1207 1651,1202 1664,1189'

const coins = [[160, 1048], [160, 1071], [160, 1093], [172, 1048], [172, 1071], [172, 1093]]

const dateTicks = [296, 370, 445, 592, 654, 780, 1060, 1120, 1262, 1323, 1385, 1505, 1565, 1610]
const dateLabels = [
  { t: '12', x: 223 }, { t: '1', x: 520 }, { t: '2', x: 712 },
  { t: '4', x: 1201 }, { t: '5', x: 1445 }, { t: '6', x: 1651 },
]

const tabs1 = [
  { t: '指标', w: 47 }, { t: '窗口', w: 45 }, { t: 'MACD', w: 63 }, { t: 'VOL-TDX', w: 87 }, { t: 'CCI', w: 44 },
  { t: '趋势动力', w: 84 }, { t: '主力监控', w: 84 }, { t: '私募主图', w: 84 }, { t: 'MA2', w: 47 }, { t: '测试主图', w: 83 },
  { t: '测试幅图A', w: 94 }, { t: '测试幅图B', w: 97 }, { t: '更多', w: 48 }, { t: '设置', w: 48, c: 'cy' }, { t: '', w: 711 },
]
const tabs2 = [
  { t: '扩展∧', w: 61 }, { t: '关联报价', w: 84 }, { t: '资金分布', w: 85 }, { t: '综合资讯', w: 82, c: 'ye' },
  { t: '行业资讯', w: 85, c: 'ye' }, { t: '互动问答', w: 84, c: 'ye' }, { t: '新用户福利专享', w: 138 },
]

const sells = [['卖五', '27.34', '67.0'], ['卖四', '27.33', '16.4'], ['卖三', '27.32', '45.1'], ['卖二', '27.31', '110.6'], ['卖一', '27.30', '10.9']]
const buys = [['买一', '27.26', '8.2'], ['买二', '27.25', '21.3'], ['买三', '27.24', '0.3'], ['买四', '27.23', '1.4'], ['买五', '27.22', '0.5']]

const stats1 = [
  ['今开', '26.55', 'red'], ['均价', '27.00', 'red'],
  ['最高', '27.36', 'red'], ['量比', '1.62', 'red'],
  ['最低', '26.35', 'green'], ['市值', '32.8', 'gray', '亿'],
  ['现量', '1060', 'mag'], ['总量', '50051', 'gray'],
  ['外盘', '26639', 'red'], ['内盘', '23412', 'green'],
]
const stats2 = [
  ['换手', '4.26%'], ['股本', '1.20', '亿'],
  ['净资', '3.23'], ['流通', '1.17', '亿'],
  ['收益(一)', '0.005'], ['PE(动)', '1431.8'],
]

const flows = [
  { l: '净流入额', w: 12, v: '895.7', p: '7%' },
  { l: '大宗流入', w: 4, v: '349.7', p: '3%' },
  { l: '5日净流入额', w: 36, v: '2504', p: '6%' },
  { l: '5日大宗流入', w: 19, v: '1378', p: '3%' },
]

const ticks = [
  ['14:56', '27.27', '0.5', 'S', '1'], ['14:56', '27.27', '2.2', 'S', '2'], ['14:56', '27.27', '1.9', 'S', '2'],
  ['14:56', '27.25', '5.5', 'S', '3'], ['14:56', '27.25', '1.9', 'S', '3'], ['14:56', '27.28', '20.7', 'B', '9'],
  ['14:56', '27.28', '2.7', 'B', '2'], ['14:56', '27.25', '2.2', 'S', '3'], ['14:56', '27.25', '1.1', 'S', '2'],
  ['14:56', '27.28', '0.3', 'B', '1'], ['14:56', '27.30', '54.3', 'B', '20'], ['14:56', '27.30', '1.6', 'S', '1'],
  ['14:56', '27.30', '4.9', 'S', '4'], ['14:56', '27.30', '7.9', 'S', '5'], ['14:56', '27.30', '4.6', 'B', '7'],
  ['14:56', '27.31', '20.8', 'B', '11'], ['14:56', '27.25', '2.7', 'S', '5'], ['14:56', '27.31', '4.9', 'B', '5'],
  ['14:56', '27.32', '57.6', 'B', '12'], ['14:57', '27.31', '1.9', 'S', '3'], ['15:00', '27.30', '289.4', '', '177'],
]

const sideLabels = ['1', '5', '15', '30', '60', '日', '周', '月', 'N', '多', '季', '年']

const markets = [
  { n: '上证', p: '3195.46', d: '13.30', r: '0.42%', a: '4137' },
  { n: '深证', p: '11628.3', d: '77.04', r: '0.67%', a: '4780' },
  { n: '中小', p: '8024.39', d: '73.55', r: '0.93%', a: '615.8' },
]
</script>

<style scoped>
.app {
  position: relative;
  width: 2160px;
  height: 1395px;
  overflow: hidden;
  background: #000;
  font-family: "Liberation Sans", "Noto Sans CJK SC", sans-serif;
}

.titlebar {
  display: flex;
  align-items: center;
  box-sizing: border-box;
  height: 35px;
  padding: 0 0 0 5px;
  background: #f1f1f1;
  border-bottom: 2px solid #a8a8a8;
  font-size: 18px;
  color: #333;
}
.app-name { margin-left: 5px; width: 126px; white-space: nowrap; }
.menu { display: flex; align-items: center; gap: 36px; margin-left: 46px; white-space: nowrap; }
.menu .dot { position: relative; }
.menu .dot::after {
  content: "";
  position: absolute;
  right: -15px;
  top: 3px;
  width: 5px;
  height: 5px;
  background: #f00;
}
.menu.right { gap: 21px; margin-left: 236px; }
.login { color: #f00; margin-left: 265px; font-size: 19px; white-space: nowrap; }
.login.stock { margin-left: 25px; }
.clock {
  display: flex;
  gap: 8px;
  align-items: center;
  height: 32px;
  margin-left: 19px;
  padding: 0 4px;
  border-left: 1px solid #bbb;
  border-right: 1px solid #bbb;
  font-size: 17px;
}
.clock .time { letter-spacing: 0.6px; }
.winbtns { display: flex; gap: 20px; align-items: center; margin-left: 16px; }

.body { display: flex; height: 1323px; }
.left { width: 1788px; flex: none; }

.toolbar {
  display: flex;
  align-items: center;
  box-sizing: border-box;
  height: 32px;
  border-bottom: 2px solid #a00000;
  font-size: 18px;
  color: #b8b8b8;
  white-space: nowrap;
  gap: 13px;
}
.tool-toggle {
  display: flex;
  align-items: center;
  justify-content: center;
  width: 35px;
  height: 100%;
  margin-right: -7px;
  border-right: 2px solid #a00000;
}
.period.active { color: #30e8f0; }
.period.more { display: inline-flex; align-items: center; gap: 4px; margin-left: -1px; }
.tool-btns { display: flex; height: 100%; margin-left: auto; margin-right: 1px; }
.tool-btns span {
  display: flex;
  align-items: center;
  justify-content: center;
  width: 52.5px;
  border-left: 2px solid #a00000;
  box-sizing: border-box;
}

.pane { position: relative; }
.chart { display: block; font-family: "Liberation Sans", "Noto Sans CJK SC", sans-serif; }
.legend {
  position: absolute;
  left: 4px;
  top: 2px;
  z-index: 1;
  display: flex;
  align-items: center;
  gap: 8px;
  height: 24px;
  white-space: nowrap;
  font-size: 17px;
}
.stock-name { font-size: 18px; color: #c8c8c8; }
.ma-item { display: inline-flex; align-items: center; gap: 4px; margin-right: 6px; }
.legend.sub { left: 2px; top: 3px; gap: 0; font-size: 18px; }
.sub-title { margin-left: 6px; color: #c0c0c0; }
.sub-item { display: inline-flex; align-items: center; gap: 0; white-space: pre; }
.sub-item em { font-style: normal; }
.sub-item svg { margin-left: 4px; }

.grid-red line { stroke: #a80000; stroke-width: 1.5; stroke-dasharray: 2 4; }
.grid-white line { stroke: #d0d0d0; stroke-width: 1.6; stroke-dasharray: 2 12; }
.base-dots { stroke: #999; stroke-width: 1.6; stroke-dasharray: 2 11; }
.dot-bar { stroke: #d85050; stroke-width: 1.6; stroke-dasharray: 2 3; }
.wick-r { stroke: #f02828; stroke-width: 1.3; }
.wick-c { stroke: #40e8e8; stroke-width: 1.3; }
.wick-w { stroke: #eee; stroke-width: 1.3; }
.body-r { fill: #000; stroke: #f02828; stroke-width: 1.5; }
.body-c { fill: #50ffff; }
.body-w { fill: #eee; }
.ma { fill: none; stroke-width: 1.5; stroke-linejoin: round; }
.blue { fill: none; stroke: #0000f0; stroke-width: 3; stroke-linejoin: round; }
.vol-gray { fill: #000; stroke: #8c8c8c; stroke-width: 1.6; }
.axis { stroke: #a80000; stroke-width: 2; }
.tick { stroke: #a80000; stroke-width: 1.2; }
.lbl-red { fill: #e02828; font-size: 17px; }
.lbl-gray { fill: #b0b0b0; font-size: 17px; }
.lbl-light { fill: #c8c8e0; font-size: 17px; }
.lbl-date { fill: #c0c8f0; font-size: 17px; }
.lbl-cjk { fill: #b8b8b8; font-size: 18px; }
.marker { fill: #eee; font-size: 15px; }
.build { fill: #20d8e0; font-size: 19px; }

.tabs {
  display: flex;
  box-sizing: border-box;
  height: 27px;
  border-bottom: 2px solid #a00000;
  font-size: 18px;
  color: #b8b8b8;
  white-space: nowrap;
}
.tabs.first { height: 26px; }
.tabs span {
  display: flex;
  align-items: center;
  justify-content: center;
  box-sizing: border-box;
  border-right: 1.5px solid #a00000;
}
.tabs span:empty { border-right: 0; }
.tabs .cy { color: #20e0e0; }
.tabs .ye { color: #c8c800; }

.quote {
  width: 334px;
  flex: none;
  box-sizing: border-box;
  border-left: 2px solid #a00000;
  overflow: hidden;
  color: #c0c0c0;
  line-height: 1.1;
}
.quote b { font-size: 20px; font-weight: 700; white-space: nowrap; }
.quote i { font-style: normal; font-weight: 400; font-size: 23px; }
.lab { font-size: 22px; color: #b8b8b8; white-space: nowrap; }
.lab i { margin-left: 0; font-size: 20px; }
.red { color: #f03030; }
.green { color: #00e800; }
.gray { color: #c0c0c0; }
.mag { color: #c000c8; }
.vol { color: #c8c800; }

.q-title { display: flex; align-items: center; height: 40px; padding-left: 52px; }
.q-title b { font-size: 28px; color: #14d8ee; }
.q-title span { margin-left: 8px; font-size: 20px; color: #b8b8b8; }
.q-price {
  display: grid;
  grid-template-columns: 121px 120px 83px;
  align-items: center;
  box-sizing: border-box;
  height: 45px;
  padding-left: 2px;
  border-bottom: 2px solid #a00000;
  font-size: 29px;
  font-weight: 700;
  color: #f03030;
}
.q-price .pct { text-align: right; }
.book { box-sizing: border-box; padding: 1px 4px 0 1px; }
.book.sell { height: 136px; border-bottom: 2px solid #3a70a0; position: relative; }
.book.sell::after { content: ""; position: absolute; left: 0; bottom: -2px; width: 36px; height: 2px; background: #b08030; }
.book.buy { height: 139px; border-bottom: 2px solid #a00000; padding-top: 2px; }
.book-row { display: grid; grid-template-columns: 107px 52px 1fr; align-items: center; height: 27px; }
.book-row .red { text-align: right; }
.book-row .vol { text-align: right; }
.stats {
  display: grid;
  grid-template-columns: 159px 158px;
  column-gap: 10px;
  box-sizing: border-box;
  padding-left: 1px;
  border-bottom: 2px solid #a00000;
}
.s1 { height: 145px; padding-top: 3px; grid-auto-rows: 28.4px; }
.s2 { height: 94px; padding-top: 3px; grid-auto-rows: 28.4px; }
.cell { display: flex; justify-content: space-between; align-items: center; }
.flow { box-sizing: border-box; height: 120px; padding: 3px 2px 0 1px; border-bottom: 2px solid #a00000; }
.flow-row { display: grid; grid-template-columns: 138px 50px 80px 1fr; align-items: center; height: 28.4px; }
.flow-row .red { text-align: right; }
.bar-cell u { display: block; height: 10px; background: #f03030; }
.ticks { padding: 3px 0 0 1px; }
.tick-row { display: grid; grid-template-columns: 100px 55px 96px 24px 50px; align-items: center; height: 26.95px; }
.tick-row b:nth-child(2), .tick-row b:nth-child(3), .tick-row b:nth-child(5) { text-align: right; }
.tick-row b:nth-child(4) { text-align: right; }

.sidebar { flex: 1; background: #f0f0f0; margin-top: -1px; }
.sidebar hr { height: 2px; margin: 4.5px 4px; border: 0; background: #b8b8b8; }
.ic { display: flex; align-items: center; justify-content: center; height: 34.5px; }
.ar { fill: #fff; stroke: #5aa0e8; stroke-width: 2; }
.fr { fill: #fff; stroke: #5aa0e8; stroke-width: 2; }
.ic-txt { fill: #2050c0; font-size: 13px; font-family: "Liberation Sans", sans-serif; }
.ic-fx { fill: #1050a0; font-size: 15px; font-style: italic; font-family: "Liberation Serif", serif; }
.ic-s { fill: #c82020; font-size: 22px; font-weight: 700; font-family: "Liberation Sans", sans-serif; }
.rsi { color: #3a3ab8; font-size: 16px; font-weight: 700; }
.side-labels { margin-top: 4px; }
.lab-btn { font-size: 16px; color: #2040c0; }
.lab-btn.on { box-sizing: border-box; height: 28px; margin: 3px 6px; background: #fff; border: 1px solid #9ab8e0; }

.status {
  display: flex;
  align-items: center;
  box-sizing: border-box;
  height: 37px;
  padding: 2px 0 0 2px;
  background: #f0f0f0;
  border-bottom: 2px solid #333;
  white-space: nowrap;
}
.st-icon { margin-right: -4px; }
.st-name { margin-left: 3px; font-size: 24px; color: #333; width: 51px; }
.st-red { margin-left: 24px; font-size: 21px; font-weight: 700; color: #f00; }
.st-red.first { margin-left: 5px; }
.st-amt { margin: 0 21px 0 28px; font-size: 20.5px; color: #111; }
.st-amt i { font-style: normal; font-size: 24px; color: #333; }
.st-total { padding-left: 6px; margin-left: -9px; border-left: 1px solid #aaa; font-size: 23px; color: #333; }

.ime {
  position: absolute;
  left: 1px;
  top: 1290px;
  display: flex;
  align-items: stretch;
  box-sizing: border-box;
  width: 157px;
  height: 24px;
  padding: 1px 2px;
  gap: 1px;
  background: #d8d4cc;
  border: 1px solid #f4f4f4;
  font-size: 18px;
  color: #222;
  line-height: 20px;
}
.ime b { width: 19px; text-align: center; color: #a00000; background: #c8c4bc; }
.ime-name { padding: 0 2px; background: #e0dcd4; white-space: nowrap; }
.ime-key { width: 19px; display: flex; align-items: center; justify-content: center; font-size: 13px; background: #c8c4bc; }

.watermark {
  position: absolute;
  left: 1360px;
  top: 1314px;
  display: flex;
  align-items: center;
  width: 800px;
  height: 81px;
  background: #7eaad8;
}
.wm-cn { margin-left: 17px; font-size: 55px; font-weight: 900; color: #16108c; white-space: nowrap; }
.wm-logo { margin-left: 27px; }
.wm-mei { fill: #e8c84a; font-size: 54px; font-weight: 900; }
.wm-tiny { fill: #fff; font-size: 8px; }
.wm-url {
  margin-left: 26px;
  font-family: "DejaVu Serif", serif;
  font-size: 48px;
  font-weight: 700;
  color: #fff;
  white-space: nowrap;
}
</style>

<style>
html, body { margin: 0; background: #000; }
</style>
